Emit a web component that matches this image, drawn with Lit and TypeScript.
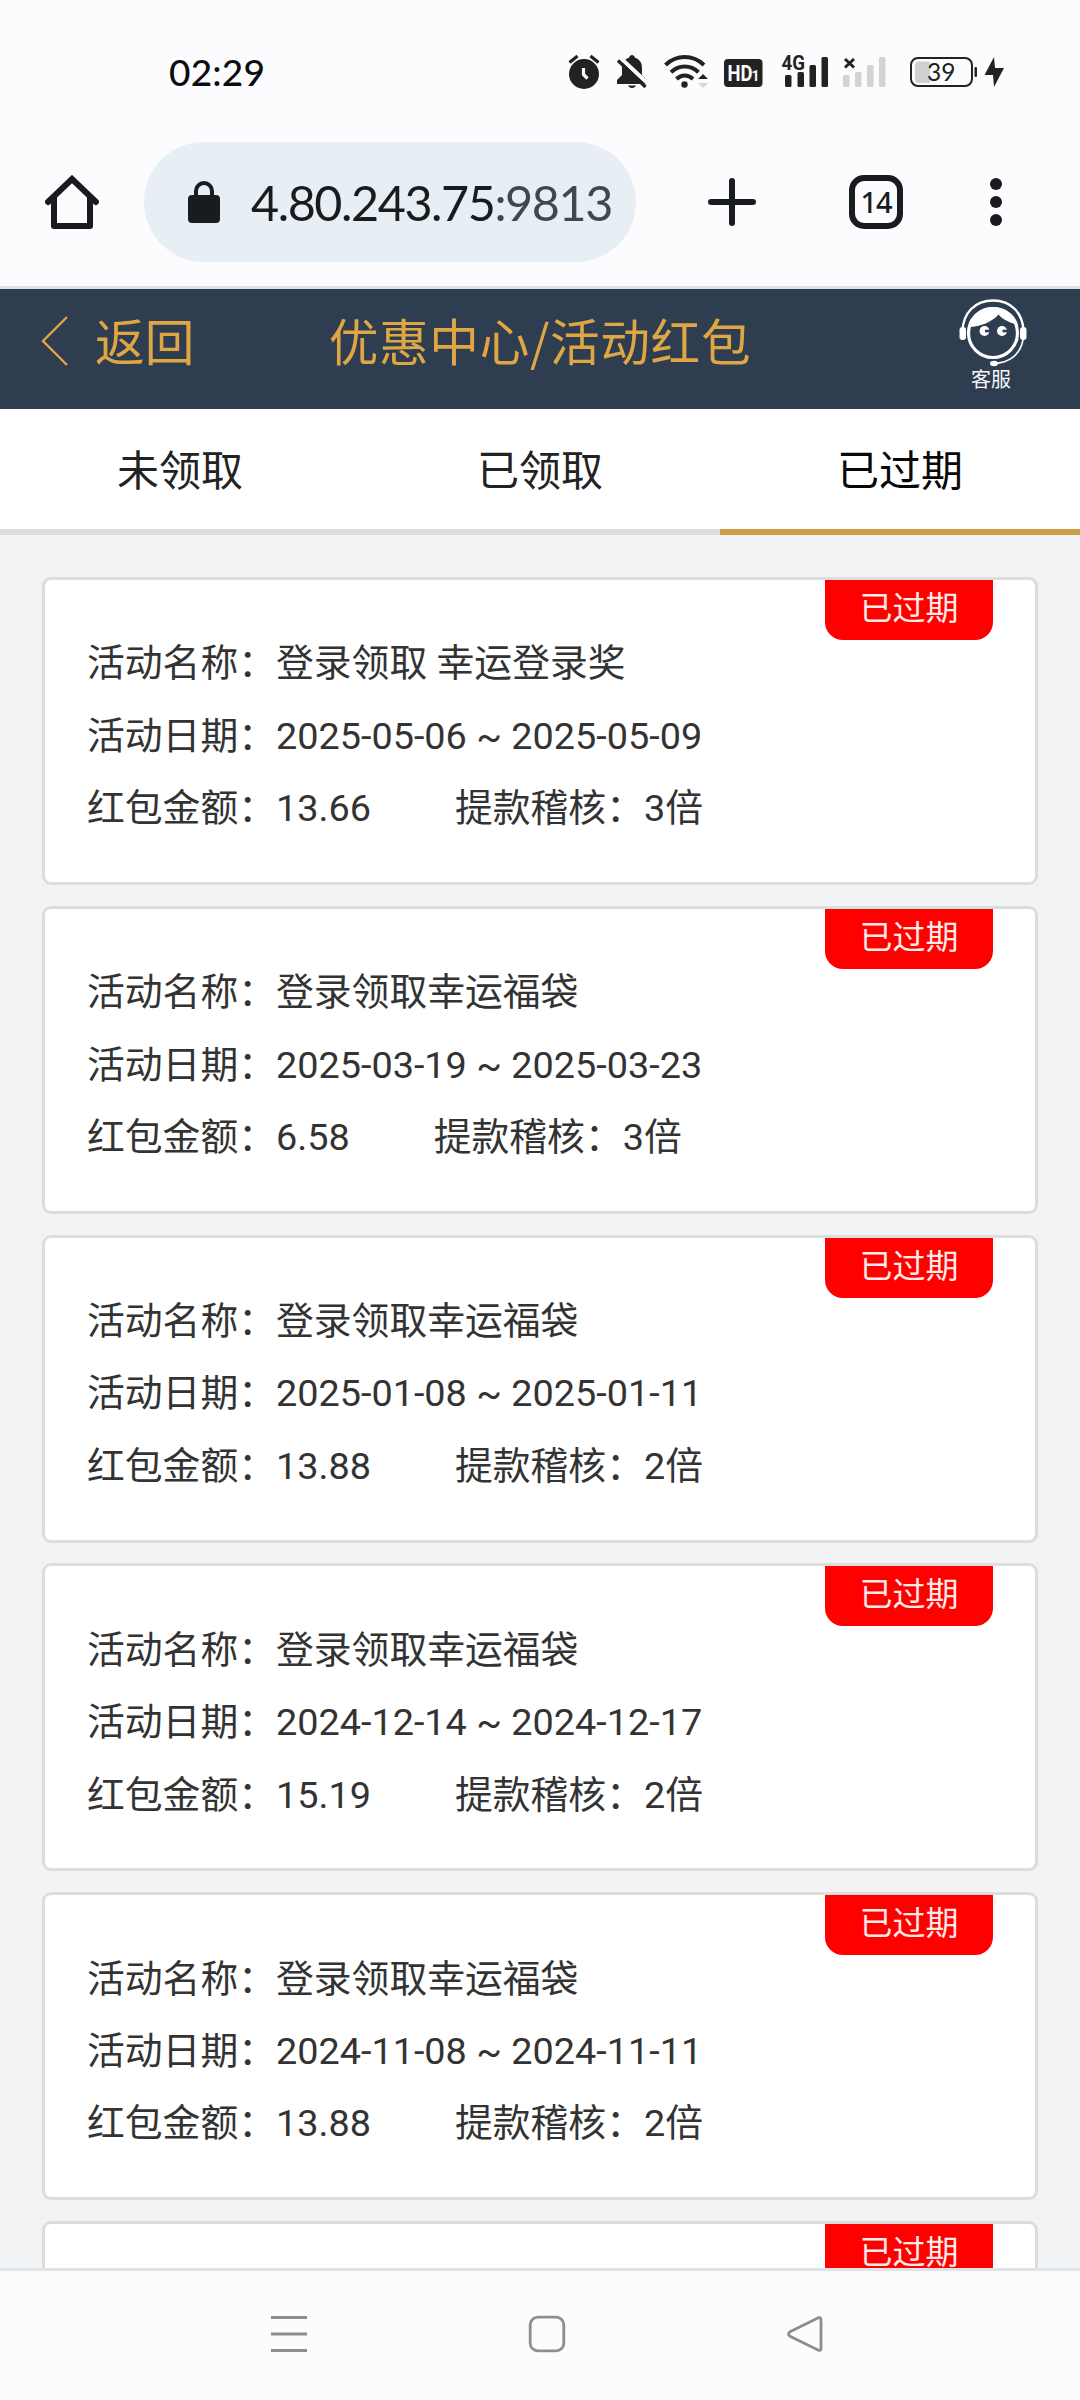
import { LitElement, html, css } from "lit";
import { customElement, property } from "lit/decorators.js";

interface Packet {
  name: string;
  dates: string;
  amount: string;
  times: string;
}

const packets: Packet[] = [
  { name: "登录领取 幸运登录奖", dates: "2025-05-06 ~ 2025-05-09", amount: "13.66", times: "3倍" },
  { name: "登录领取幸运福袋", dates: "2025-03-19 ~ 2025-03-23", amount: "6.58", times: "3倍" },
  { name: "登录领取幸运福袋", dates: "2025-01-08 ~ 2025-01-11", amount: "13.88", times: "2倍" },
  { name: "登录领取幸运福袋", dates: "2024-12-14 ~ 2024-12-17", amount: "15.19", times: "2倍" },
  { name: "登录领取幸运福袋", dates: "2024-11-08 ~ 2024-11-11", amount: "13.88", times: "2倍" },
  { name: "", dates: "", amount: "", times: "" },
];

@customElement("status-bar")
export class StatusBar extends LitElement {
  static styles = css`
    :host { display: block; height: 130px; }
    .bar { display: flex; justify-content: space-between; padding: 48px 72px 0 169px; }
    .time { font: 500 37px/48px Lato, "Noto Sans", sans-serif; color: #0c0d0f; letter-spacing: 0.2px; }
    svg { display: block; width: 444px; height: 48px; }
    .num { font: 24.5px Lato, sans-serif; fill: #222; }
    .net { font: bold 20px Roboto, sans-serif; fill: #222; }
    .hd { font: bold 22px Roboto, sans-serif; fill: #fcfcff; }
    .one { font: bold 14px Roboto, sans-serif; fill: #fcfcff; }
  `;
  render() {
    return html`<div class="bar">
      <span class="time">02:29</span>
      <svg viewBox="564 48 444 48" fill="#222">
        <circle cx="584" cy="74" r="15"></circle>
        <path d="M569.5 62.5l8-6.500M598.500 62.500l-8-6.500" stroke="#222" stroke-width="3.2"></path>
        <path d="M583.500 68v6.500l4 4" fill="none" stroke="#fcfcff" stroke-width="3.200"></path>
        <path d="M617 84v-4l5-5v-7c0-6 3-9 7-10.300 1-3.600 5-3.600 6 0 4 1.300 7 4.300 7 10.300v7l5 5v4z"></path>
        <path d="M628 85.500h8c-1 3.300-7 3.300-8 0z"></path>
        <path d="M620 57.500l29 27" stroke="#fcfcff" stroke-width="4"></path>
        <path d="M618 60.500l27.500 26.500" stroke="#222" stroke-width="3.200"></path>
        <g fill="none" stroke="#222" stroke-width="4">
          <path d="M665.500 65c11-10.600 27.500-10.600 38.500 0"></path>
          <path d="M671 72.300c8-7.600 19.500-7.600 27.500 0"></path>
          <path d="M676.500 79c5-4.800 11.500-4.800 16.500 0"></path>
        </g>
        <circle cx="684.500" cy="84.500" r="3.200"></circle>
        <path d="M698 79l5-5 5 5z"></path>
        <path d="M698 83h10l-5 5z" fill="#d6d6d8"></path>
        <rect x="724" y="59" width="38.500" height="28" rx="4"></rect>
        <text class="hd" x="727.500" y="81.200" textLength="25" lengthAdjust="spacingAndGlyphs">HD</text>
        <text class="one" x="751.500" y="81.200">1</text>
        <text class="net" x="781.500" y="69.800" textLength="23.500" lengthAdjust="spacingAndGlyphs">4G</text>
        <rect x="785" y="75" width="6.500" height="12" rx="1.500"></rect>
        <rect x="797.500" y="72" width="6.500" height="15" rx="1.500"></rect>
        <rect x="809.500" y="65" width="6.500" height="22" rx="1.500"></rect>
        <rect x="821.500" y="57" width="6.500" height="30" rx="1.500"></rect>
        <path d="M845 59l9 8.500M854 59l-9 8.500" stroke="#222" stroke-width="3"></path>
        <g fill="#d3d3d5">
          <rect x="843" y="75" width="6.500" height="12" rx="1.500"></rect>
          <rect x="855" y="72" width="6.500" height="15" rx="1.500"></rect>
          <rect x="867" y="65" width="6.500" height="22" rx="1.500"></rect>
          <rect x="879" y="57" width="6.500" height="30" rx="1.500"></rect>
        </g>
        <path d="M919 61.500h11v21.500h-11a4 4 0 0 1-4-4v-13.500a4 4 0 0 1 4-4z" fill="#d0d0d2"></path>
        <rect x="911" y="58" width="61" height="28" rx="7" fill="none" stroke="#222" stroke-width="2"></rect>
        <rect x="974.500" y="67" width="2.500" height="10" rx="1.200"></rect>
        <text class="num" x="927" y="81.300">39</text>
        <path d="M994 57l-9.500 18h8.500l1 12 10-19h-9z"></path>
      </svg>
    </div>`;
  }
}

@customElement("browser-bar")
export class BrowserBar extends LitElement {
  static styles = css`
    :host { display: block; height: 156px; border-bottom: 3px solid #dbe3e9; color: #191c1e; }
    .bar { display: flex; align-items: center; height: 120px; padding-top: 12px; }
    svg { display: block; flex: none; }
    .home { margin: 0 45px; }
    .pill { box-sizing: border-box; width: 492px; height: 120px; border-radius: 60px; background: #e7eef4; display: flex; align-items: center; padding-left: 44px; }
    .url { margin-left: 31px; font: 48.500px/60px Lato, "Noto Sans", sans-serif; letter-spacing: -1.450px; white-space: nowrap; }
    .port { color: #42474d; }
    .plus { margin-left: 69px; }
    .count { box-sizing: border-box; margin-left: 90px; width: 54px; height: 54px; border: 6px solid #191c1e; border-radius: 15px; font: 500 29px/42px "Noto Sans", sans-serif; text-align: center; letter-spacing: -1px; }
    .dots { margin-left: 87px; }
  `;
  render() {
    return html`<div class="bar">
      <svg class="home" width="54" height="54" viewBox="0 0 54 54" fill="none" stroke="#191c1e" stroke-width="6" stroke-linejoin="round" stroke-linecap="round">
        <path d="M3 27L27 4l24 23" stroke-linejoin="miter"></path><path d="M9 23v28h36V23"></path>
      </svg>
      <div class="pill">
        <svg width="32" height="42" viewBox="0 0 32 42"><rect y="14" width="32" height="28" rx="4" fill="#191c1e"></rect><path d="M8 16v-6a8 8 0 0 1 16 0v6" fill="none" stroke="#191c1e" stroke-width="4"></path></svg>
        <span class="url">4.80.243.75<span class="port">:9813</span></span>
      </div>
      <svg class="plus" width="54" height="54" viewBox="0 0 54 54"><path d="M27 6v42M6 27h42" stroke="#191c1e" stroke-width="6" stroke-linecap="round"></path></svg>
      <div class="count">14</div>
      <svg class="dots" width="12" height="48" viewBox="0 0 12 48" fill="#191c1e"><circle cx="6" cy="6" r="6"></circle><circle cx="6" cy="24" r="6"></circle><circle cx="6" cy="42" r="6"></circle></svg>
    </div>`;
  }
}

@customElement("page-header")
export class PageHeader extends LitElement {
  static styles = css`
    :host { display: block; }
    .head { display: grid; grid-template-columns: 240px 1fr 240px; height: 120px; background: #2e3d50; color: #dfa644; font: 49.700px/100px "Noto Sans CJK SC", sans-serif; }
    .back { display: flex; align-items: flex-start; padding-left: 41px; gap: 26px; white-space: nowrap; }
    .back svg { margin-top: 27px; }
    .title { text-align: center; white-space: nowrap; letter-spacing: 0.600px; }
    .service { display: flex; flex-direction: column; align-items: center; padding: 10px 0 0 62px; color: #f3f6fa; font-size: 20px; line-height: 24px; }
    .service svg { display: block; margin-left: 3px; }
  `;
  render() {
    return html`<div class="head">
      <div class="back">
        <svg width="28" height="50" viewBox="0 0 28 50"><path d="M26 1L2 25l24 24" fill="none" stroke="#dfa644" stroke-width="2.400"></path></svg>
        <span>返回</span>
      </div>
      <div class="title">优惠中心/活动红包</div>
      <div class="service">
        <svg width="68" height="68" viewBox="0 0 68 68" fill="none" stroke="#fff">
          <path d="M3.500 32C4 14 16 1.500 34 1.500S64 14 64.500 32" stroke-width="2.400"></path>
          <circle cx="34" cy="34" r="24.500" stroke-width="3.200"></circle>
          <path d="M9.500 28C12 15 22 8 34 8s22 7 25 18c-7-2-15-5-19.500-10.500C33 23 22 27.500 9.500 28z" fill="#fff" stroke="none"></path>
          <rect x=".5" y="28" width="6.500" height="13" rx="3" fill="#fff" stroke="none"></rect>
          <rect x="61" y="28" width="6.500" height="13" rx="3" fill="#fff" stroke="none"></rect>
          <circle cx="25.500" cy="32" r="5" fill="#fff" stroke="none"></circle><path d="M26 32h5" stroke="#2e3d50" stroke-width="2.600"></path>
          <circle cx="43" cy="32" r="5" fill="#fff" stroke="none"></circle><path d="M43.500 32h5" stroke="#2e3d50" stroke-width="2.600"></path>
          <path d="M64 41C61 56 50 64 35 64.500" stroke-width="1.600"></path>
          <ellipse cx="35" cy="64.500" rx="4" ry="2.800" fill="#fff" stroke="none"></ellipse>
        </svg>
        <span>客服</span>
      </div>
    </div>`;
  }
}

@customElement("tab-strip")
export class TabStrip extends LitElement {
  static styles = css`
    :host { display: block; }
    .tabs { display: grid; grid-template-columns: repeat(3, 1fr); background: #fff; }
    .tab { height: 120px; border-bottom: 6px solid #dcdddd; text-align: center; font: 42px/118px "Noto Sans CJK SC", sans-serif; color: #222; }
    .active { border-color: #cd9e45; color: #080808; }
  `;
  render() {
    return html`<div class="tabs"><div class="tab">未领取</div><div class="tab">已领取</div><div class="tab active">已过期</div></div>`;
  }
}

@customElement("packet-card")
export class PacketCard extends LitElement {
  @property({ attribute: false }) packet!: Packet;
  static styles = css`
    :host { display: block; }
    .card { position: relative; box-sizing: border-box; height: 308px; border: 3px solid #dddddd; border-radius: 9px; background: #fff; padding: 47.400px 42px 0; color: #333; font: 37.800px/72.400px Roboto, "Noto Sans CJK SC", sans-serif; }
    .row { height: 72.400px; white-space: pre; }
    .audit { margin-left: 84px; }
    .badge { position: absolute; top: 0; right: 42px; width: 168px; height: 60px; border-radius: 0 0 18px 18px; background: #f00; color: #ffeaea; text-align: center; font: 33px/53px "Noto Sans CJK SC", sans-serif; }
  `;
  render() {
    const p = this.packet;
    return html`<div class="card">
      <div class="badge">已过期</div>
      ${p.name
        ? html`<div class="row">活动名称：${p.name}</div>
            <div class="row">活动日期：${p.dates}</div>
            <div class="row">红包金额：${p.amount}<span class="audit">提款稽核：${p.times}</span></div>`
        : null}
    </div>`;
  }
}

@customElement("nav-bar")
export class NavBar extends LitElement {
  static styles = css`
    :host { display: block; box-sizing: border-box; height: 132px; border-top: 3px solid #dfe3e7; background: #fcfcff; }
    .nav { display: flex; justify-content: space-between; padding: 44px 256px 0 270px; }
    svg { display: block; fill: none; stroke: #8e8e90; stroke-width: 2.800; }
  `;
  render() {
    return html`<div class="nav">
      <svg width="38" height="38" viewBox="0 0 38 38"><path d="M1 2.500h36M1 19h36M1 35.500h36"></path></svg>
      <svg width="38" height="38" viewBox="0 0 38 38"><rect x="2.200" y="2.200" width="33.600" height="33.600" rx="7.500"></rect></svg>
      <svg width="38" height="38" viewBox="0 0 38 38"><path d="M32.500 2.700L4 16.700Q1 19 4 21.300L32.500 35.300Q35 36 35 33.500V4.500Q35 2 32.500 2.700z"></path></svg>
    </div>`;
  }
}

@customElement("app-root")
export class AppRoot extends LitElement {
  static styles = css`
    :host { display: flex; flex-direction: column; width: 1080px; height: 2400px; overflow: hidden; background: #fcfcff; }
    .list { flex: 1; min-height: 0; overflow: hidden; background: #f2f3f5; padding: 42px 42px 0; display: flex; flex-direction: column; gap: 20.800px; }
    .list > * { flex: none; }
  `;
  render() {
    return html`<status-bar></status-bar>
      <browser-bar></browser-bar>
      <page-header></page-header>
      <tab-strip></tab-strip>
      <div class="list">${packets.map((p) => html`<packet-card .packet=${p}></packet-card>`)}</div>
      <nav-bar></nav-bar>`;
  }
}
